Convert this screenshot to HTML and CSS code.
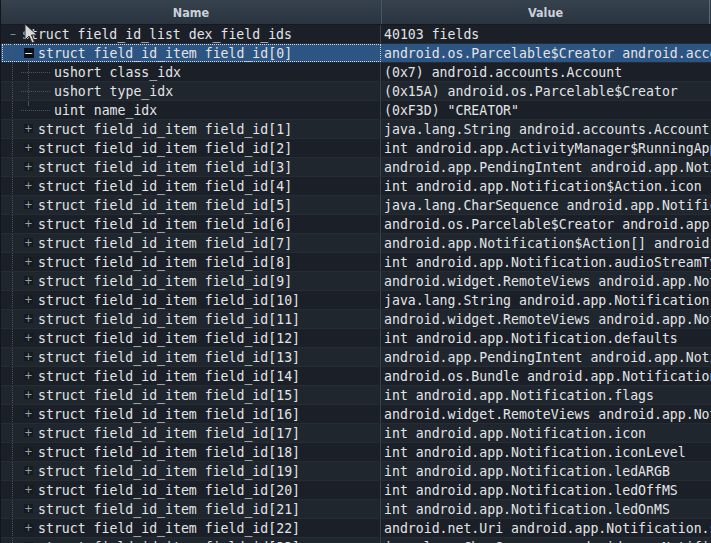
FILE: index.html
```html
<!DOCTYPE html>
<html>
<head>
<meta charset="utf-8">
<link rel="stylesheet" href="styles.css">
</head>
<body>
<div class="tree">
  <div class="header">
    <div class="hcell hname">Name</div>
    <div class="hcell hvalue">Value</div>
  </div>
  <div class="rows">
    <div class="row">
      <div class="cell name"><span class="exp root">&#8211;</span><span class="label">struct field_id_list dex_field_ids</span></div>
      <div class="cell value">40103 fields</div>
    </div>
    <div class="row selected">
      <div class="cell name focus"><span class="g v"></span><span class="exp box open">&#8722;</span><span class="label">struct field_id_item field_id[0]</span></div>
      <div class="cell value">android.os.Parcelable$Creator android.accounts.Account.CREATOR</div>
    </div>
    <div class="row">
      <div class="cell name"><span class="g v"></span><span class="g vh"></span><span class="g h"></span><span class="label">ushort class_idx</span></div>
      <div class="cell value">(0x7) android.accounts.Account</div>
    </div>
    <div class="row">
      <div class="cell name"><span class="g v"></span><span class="g vh"></span><span class="g h"></span><span class="label">ushort type_idx</span></div>
      <div class="cell value">(0x15A) android.os.Parcelable$Creator</div>
    </div>
    <div class="row">
      <div class="cell name"><span class="g v"></span><span class="g lh"></span><span class="g h"></span><span class="label">uint name_idx</span></div>
      <div class="cell value">(0xF3D) "CREATOR"</div>
    </div>
    <div class="row"><div class="cell name"><span class="g v"></span><span class="exp box">+</span><span class="label">struct field_id_item field_id[1]</span></div><div class="cell value">java.lang.String android.accounts.Account.name</div></div>
    <div class="row"><div class="cell name"><span class="g v"></span><span class="exp box">+</span><span class="label">struct field_id_item field_id[2]</span></div><div class="cell value">int android.app.ActivityManager$RunningAppProcessInfo.importance</div></div>
    <div class="row"><div class="cell name"><span class="g v"></span><span class="exp box">+</span><span class="label">struct field_id_item field_id[3]</span></div><div class="cell value">android.app.PendingIntent android.app.Notification.contentIntent</div></div>
    <div class="row"><div class="cell name"><span class="g v"></span><span class="exp box">+</span><span class="label">struct field_id_item field_id[4]</span></div><div class="cell value">int android.app.Notification$Action.icon</div></div>
    <div class="row"><div class="cell name"><span class="g v"></span><span class="exp box">+</span><span class="label">struct field_id_item field_id[5]</span></div><div class="cell value">java.lang.CharSequence android.app.Notification$Action.title</div></div>
    <div class="row"><div class="cell name"><span class="g v"></span><span class="exp box">+</span><span class="label">struct field_id_item field_id[6]</span></div><div class="cell value">android.os.Parcelable$Creator android.app.Notification$Action.CREATOR</div></div>
    <div class="row"><div class="cell name"><span class="g v"></span><span class="exp box">+</span><span class="label">struct field_id_item field_id[7]</span></div><div class="cell value">android.app.Notification$Action[] android.app.Notification.actions</div></div>
    <div class="row"><div class="cell name"><span class="g v"></span><span class="exp box">+</span><span class="label">struct field_id_item field_id[8]</span></div><div class="cell value">int android.app.Notification.audioStreamType</div></div>
    <div class="row"><div class="cell name"><span class="g v"></span><span class="exp box">+</span><span class="label">struct field_id_item field_id[9]</span></div><div class="cell value">android.widget.RemoteViews android.app.Notification.bigContentView</div></div>
    <div class="row"><div class="cell name"><span class="g v"></span><span class="exp box">+</span><span class="label">struct field_id_item field_id[10]</span></div><div class="cell value">java.lang.String android.app.Notification.category</div></div>
    <div class="row"><div class="cell name"><span class="g v"></span><span class="exp box">+</span><span class="label">struct field_id_item field_id[11]</span></div><div class="cell value">android.widget.RemoteViews android.app.Notification.contentView</div></div>
    <div class="row"><div class="cell name"><span class="g v"></span><span class="exp box">+</span><span class="label">struct field_id_item field_id[12]</span></div><div class="cell value">int android.app.Notification.defaults</div></div>
    <div class="row"><div class="cell name"><span class="g v"></span><span class="exp box">+</span><span class="label">struct field_id_item field_id[13]</span></div><div class="cell value">android.app.PendingIntent android.app.Notification.deleteIntent</div></div>
    <div class="row"><div class="cell name"><span class="g v"></span><span class="exp box">+</span><span class="label">struct field_id_item field_id[14]</span></div><div class="cell value">android.os.Bundle android.app.Notification.extras</div></div>
    <div class="row"><div class="cell name"><span class="g v"></span><span class="exp box">+</span><span class="label">struct field_id_item field_id[15]</span></div><div class="cell value">int android.app.Notification.flags</div></div>
    <div class="row"><div class="cell name"><span class="g v"></span><span class="exp box">+</span><span class="label">struct field_id_item field_id[16]</span></div><div class="cell value">android.widget.RemoteViews android.app.Notification.headsUpContentView</div></div>
    <div class="row"><div class="cell name"><span class="g v"></span><span class="exp box">+</span><span class="label">struct field_id_item field_id[17]</span></div><div class="cell value">int android.app.Notification.icon</div></div>
    <div class="row"><div class="cell name"><span class="g v"></span><span class="exp box">+</span><span class="label">struct field_id_item field_id[18]</span></div><div class="cell value">int android.app.Notification.iconLevel</div></div>
    <div class="row"><div class="cell name"><span class="g v"></span><span class="exp box">+</span><span class="label">struct field_id_item field_id[19]</span></div><div class="cell value">int android.app.Notification.ledARGB</div></div>
    <div class="row"><div class="cell name"><span class="g v"></span><span class="exp box">+</span><span class="label">struct field_id_item field_id[20]</span></div><div class="cell value">int android.app.Notification.ledOffMS</div></div>
    <div class="row"><div class="cell name"><span class="g v"></span><span class="exp box">+</span><span class="label">struct field_id_item field_id[21]</span></div><div class="cell value">int android.app.Notification.ledOnMS</div></div>
    <div class="row"><div class="cell name"><span class="g v"></span><span class="exp box">+</span><span class="label">struct field_id_item field_id[22]</span></div><div class="cell value">android.net.Uri android.app.Notification.sound</div></div>
    <div class="row"><div class="cell name"><span class="g v"></span><span class="exp box">+</span><span class="label">struct field_id_item field_id[23]</span></div><div class="cell value">java.lang.CharSequence android.app.Notification.tickerText</div></div>
  </div>
</div>
<svg class="cursor" width="14" height="22" viewBox="0 0 14 22">
  <path d="M1 1 L1 17 L5 13 L8 20 L10.5 19 L7.5 12 L13 12 Z" fill="#d8d8d8" stroke="#2a2a2a" stroke-width="1" stroke-linejoin="round"/>
</svg>
</body>
</html>
```
FILE: styles.css
```css
html, body {
  margin: 0;
  padding: 0;
  background: #1c2129;
  overflow: hidden;
}
body {
  width: 711px;
  height: 543px;
  position: relative;
}
.tree {
  width: 711px;
  height: 543px;
  overflow: hidden;
  border-left: 1px solid #12161b;
  box-sizing: border-box;
}
.header {
  display: flex;
  height: 25px;
  box-sizing: border-box;
  background: linear-gradient(#37424f, #2a3440);
  border-bottom: 1px solid #161a20;
}
.hcell {
  font-family: "DejaVu Sans Condensed", "DejaVu Sans", sans-serif;
  font-weight: bold;
  font-size: 12.5px;
  color: #c9d1da;
  display: flex;
  align-items: center;
  justify-content: center;
}
.hname {
  width: 380px;
  border-right: 1px solid #4b5664;
}
.hvalue {
  flex: 1;
  border-right: 1px solid #5b6674;
  margin-right: 1px;
}
.rows {
  display: flex;
  flex-direction: column;
}
.row {
  display: flex;
  height: 19px;
  flex: none;
  box-sizing: border-box;
  border-bottom: 1px solid #262c34;
  background: #1b2028;
  font-family: "DejaVu Sans Mono", monospace;
  font-size: 13.2px;
  color: #e2e4e6;
}
.row:nth-child(even) {
  background: #20262e;
}
.row.selected {
  background: #2d5583;
}
.cell {
  height: 18px;
  display: flex;
  align-items: center;
  white-space: nowrap;
  overflow: hidden;
}
.name {
  width: 380px;
  border-right: 1px solid #3a424d;
  padding-left: 4px;
  box-sizing: border-box;
  flex: none;
}
.name.focus {
  outline: 1px dotted #d0d8e0;
  outline-offset: -1px;
  margin-left: 1px;
  width: 379px;
  padding-left: 3px;
}
.value {
  flex: 1;
  padding-left: 3px;
}
.label {
  margin-left: 1px;
}
.g, .exp {
  width: 16px;
  height: 18px;
  flex: none;
  display: flex;
  align-items: center;
  justify-content: center;
  position: relative;
}
.g.v {
  background-image: linear-gradient(#4a525d 50%, transparent 50%);
  background-position: 7px 0;
  background-size: 1px 2px;
  background-repeat: repeat-y;
}
.g.vh {
  background-image:
    linear-gradient(#4a525d 50%, transparent 50%),
    linear-gradient(90deg, #4a525d 50%, transparent 50%);
  background-position: 7px 0, 8px 9px;
  background-size: 1px 2px, 2px 1px;
  background-repeat: repeat-y, repeat-x;
}
.g.lh {
  background-image:
    linear-gradient(90deg, #4a525d 50%, transparent 50%),
    linear-gradient(#4a525d 50%, transparent 50%);
  background-position: 8px 9px, 7px 0;
  background-size: 2px 1px, 1px 10px;
  background-repeat: repeat-x, no-repeat;
}
.g.h {
  background-image: linear-gradient(90deg, #4a525d 50%, transparent 50%);
  background-position: 0 9px;
  background-size: 2px 1px;
  background-repeat: repeat-x;
  width: 14px;
  margin-right: 2px;
}
.exp.root {
  color: #8a939e;
  font-size: 12px;
  font-family: "DejaVu Sans", sans-serif;
}
.exp.box {
  font-family: "DejaVu Sans", sans-serif;
  font-size: 10px;
  line-height: 1;
  color: #9aa2aa;
  padding-right: 1px;
  box-sizing: border-box;
  background-image: linear-gradient(#161b21, #161b21);
  background-position: 3px 4px;
  background-size: 9px 9px;
  background-repeat: no-repeat;
}
.exp.box.open {
  color: #e8ecf0;
  font-size: 11px;
  background-image: linear-gradient(#0c1014, #0c1014);
  background-size: 10px 10px;
}
.cursor {
  position: absolute;
  left: 24px;
  top: 23px;
}
```
